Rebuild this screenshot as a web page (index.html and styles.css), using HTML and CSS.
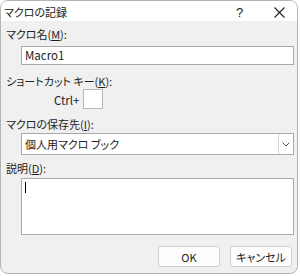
FILE: index.html
```html
<!DOCTYPE html>
<html lang="ja">
<head>
  <meta charset="UTF-8" />
  <title>マクロの記録</title>
  <link rel="stylesheet" href="styles.css">
</head>
<body>
  <div class="window">
    <div class="titlebar">
      <span class="title">マクロの記録</span>
      <span class="help">?</span>
      <span class="close">
        <svg width="11" height="11" viewBox="0 0 11 11">
          <path d="M0.5 0.5 L10.5 10.5 M10.5 0.5 L0.5 10.5" stroke="#222" stroke-width="1.1" fill="none"/>
        </svg>
      </span>
    </div>

    <div class="content">
      <label class="label">マクロ名(<u>M</u>):</label>
      <div class="field text-input">Macro1</div>

      <label class="label shortcut-label">ショートカット キー(<u>K</u>):</label>
      <div class="shortcut-row">
        <span class="ctrl">Ctrl+</span>
        <span class="key-box"></span>
      </div>

      <label class="label store-label">マクロの保存先(<u>I</u>):</label>
      <div class="field combo">
        <span class="combo-value">個人用マクロ ブック</span>
        <span class="combo-button">
          <svg width="8" height="5" viewBox="0 0 8 5">
            <path d="M0.5 0.5 L4 4 L7.5 0.5" stroke="#555" stroke-width="1" fill="none"/>
          </svg>
        </span>
      </div>

      <label class="label desc-label">説明(<u>D</u>):</label>
      <div class="field textarea"><span class="caret"></span></div>

      <div class="buttons">
        <button class="btn">OK</button>
        <button class="btn">キャンセル</button>
      </div>
    </div>
  </div>
</body>
</html>
```

FILE: styles.css
```css
* {
  box-sizing: border-box;
  margin: 0;
  padding: 0;
}

body {
  background: #ffffff;
  font-family: "Noto Sans CJK JP", "Noto Sans", sans-serif;
  font-feature-settings: "palt";
  font-size: 11px;
  color: #222222;
}

.window {
  width: 298px;
  height: 274px;
  border: 1px solid #b4b4b4;
  border-radius: 8px;
  background: #f0f0f0;
  overflow: hidden;
}

.titlebar {
  height: 20px;
  background: #ffffff;
  display: flex;
  align-items: center;
  padding-left: 3px;
}

.title {
  flex: 1;
  line-height: 20px;
  padding-top: 2px;
}

.help {
  width: 12px;
  margin-right: 26px;
  font-family: "Liberation Sans", sans-serif;
  font-size: 13px;
  padding-top: 2px;
}

.close {
  width: 11px;
  height: 11px;
  margin-right: 12px;
  display: flex;
  margin-top: 2px;
}

.content {
  padding: 5px 4px 0 5px;
  display: flex;
  flex-direction: column;
}

.label {
  line-height: 16px;
  display: block;
}

.label u {
  text-underline-offset: 1px;
}

.field {
  margin-left: 15px;
  width: 273px;
  background: #ffffff;
  border: 1px solid #a9a9a9;
}

.text-input {
  height: 19px;
  margin-top: 4px;
  line-height: 17px;
  padding-left: 3px;
  font-size: 11.5px;
}

.shortcut-label {
  margin-top: 8px;
}

.shortcut-row {
  display: flex;
  align-items: center;
  margin-left: 48px;
}

.ctrl {
  margin-right: 4px;
  padding-top: 2px;
  font-size: 11.5px;
}

.key-box {
  width: 20px;
  height: 20px;
  background: #ffffff;
  border: 1px solid #b9b9b9;
}

.store-label {
  margin-top: 7px;
}

.combo {
  height: 22px;
  margin-top: 1px;
  display: flex;
  align-items: center;
}

.combo-value {
  flex: 1;
  padding-left: 3px;
}

.combo-button {
  width: 15px;
  height: 20px;
  border-left: 1px solid #d4d4d4;
  display: flex;
  align-items: center;
  justify-content: center;
}

.desc-label {
  margin-top: 5px;
}

.textarea {
  height: 57px;
  margin-top: 2px;
  padding: 3px 0 0 3px;
}

.caret {
  display: block;
  width: 1px;
  height: 11px;
  background: #000000;
}

.buttons {
  display: flex;
  justify-content: flex-end;
  gap: 10px;
  margin-top: 11px;
  padding-right: 1px;
}

.btn {
  width: 62px;
  height: 21px;
  font-family: inherit;
  font-size: 11px;
  font-feature-settings: "palt";
  color: #222222;
  background: #fdfdfd;
  border: 1px solid #d0d0d0;
  border-radius: 3px;
}
```
